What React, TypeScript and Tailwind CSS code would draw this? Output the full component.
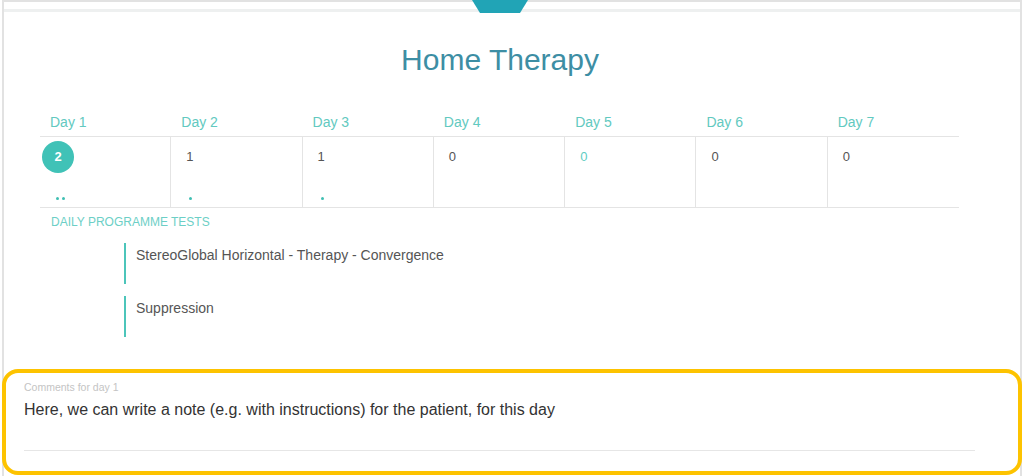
const DAYS = [
  { label: 'Day 1', count: 2, dots: 2, active: true },
  { label: 'Day 2', count: 1, dots: 1 },
  { label: 'Day 3', count: 1, dots: 1 },
  { label: 'Day 4', count: 0, dots: 0 },
  { label: 'Day 5', count: 0, dots: 0, highlight: true },
  { label: 'Day 6', count: 0, dots: 0 },
  { label: 'Day 7', count: 0, dots: 0 },
]

const TESTS = ['StereoGlobal Horizontal - Therapy - Convergence', 'Suppression']

export default function App() {
  return (
    <div className="relative h-[476px] w-[1024px] overflow-hidden bg-white font-[family-name:Liberation_Sans,Arial,sans-serif]">
      {/* Tab marker */}
      <svg className="absolute left-[472px] top-0" width="56" height="13" viewBox="0 0 56 13">
        <polygon points="0,0 56,0 48,13 8,13" fill="#21a4b6" />
      </svg>

      <div className="mx-[2px] h-full border-x-2 border-t-2 border-[#e2e2e2]">
        <div className="mt-[7px] h-[3px] bg-[#eef0f0]" />

        <h1 className="mt-[30px] pr-[24px] text-center text-[30px] leading-[36px] text-[#3d8ea4]">Home Therapy</h1>

        {/* Week grid */}
        <div className="ml-[36px] mt-[34px] w-[919px]">
          <div className="grid grid-cols-7 border-b border-[#e4e4e4] pb-[4px]">
            {DAYS.map((d) => (
              <div key={d.label} className="pl-[10px] text-[14px] leading-[20px] text-[#62c9c0]">
                {d.label}
              </div>
            ))}
          </div>
          <div className="grid h-[71px] grid-cols-7 border-b border-[#e4e4e4]">
            {DAYS.map((d, i) => (
              <div
                key={d.label}
                className={`flex flex-col pt-[4px] ${i < 6 ? 'border-r border-[#e4e4e4]' : ''}`}
              >
                <div className="flex h-8 items-center">
                  {d.active ? (
                    <span className="ml-[2px] flex h-8 w-8 items-center justify-center rounded-full bg-[#40c2b7] text-[13px] font-bold text-white">
                      {d.count}
                    </span>
                  ) : (
                    <span className={`pl-[15px] text-[13px] ${d.highlight ? 'text-[#5fcdc3]' : 'text-[#555]'}`}>
                      {d.count}
                    </span>
                  )}
                </div>
                <div className={`mt-[24px] flex gap-[3px] ${d.active ? 'pl-[16px]' : 'pl-[18px]'}`}>
                  {Array.from({ length: d.dots }).map((_, k) => (
                    <span key={k} className="h-[3px] w-[3px] rounded-full bg-[#3fbfb2]" />
                  ))}
                </div>
              </div>
            ))}
          </div>
        </div>

        <p className="ml-[47px] mt-[7px] text-[12px] leading-[14px] text-[#6ccfc6]">DAILY PROGRAMME TESTS</p>

        <div className="ml-[120px] mt-[14px] flex flex-col gap-[12px]">
          {TESTS.map((t) => (
            <div key={t} className="h-[41px] border-l-2 border-[#4cc5ba] pl-[10px] pt-[2px] text-[14px] leading-[20px] text-[#555]">
              {t}
            </div>
          ))}
        </div>
      </div>

      {/* Comment box */}
      <div className="absolute left-[2px] top-[369px] h-[106px] w-[1020px] rounded-[16px] border-[4px] border-[#fdc300] bg-white pl-[18px] pr-[43px]">
        <p className="pt-[7px] text-[10.5px] leading-[14px] text-[#c4c4c4]">Comments for day 1</p>
        <p className="mt-[6px] text-[16px] leading-[20px] text-[#333]">
          Here, we can write a note (e.g. with instructions) for the patient, for this day
        </p>
        <div className="mt-[30px] h-px bg-[#e6e6e6]" />
      </div>
    </div>
  )
}
